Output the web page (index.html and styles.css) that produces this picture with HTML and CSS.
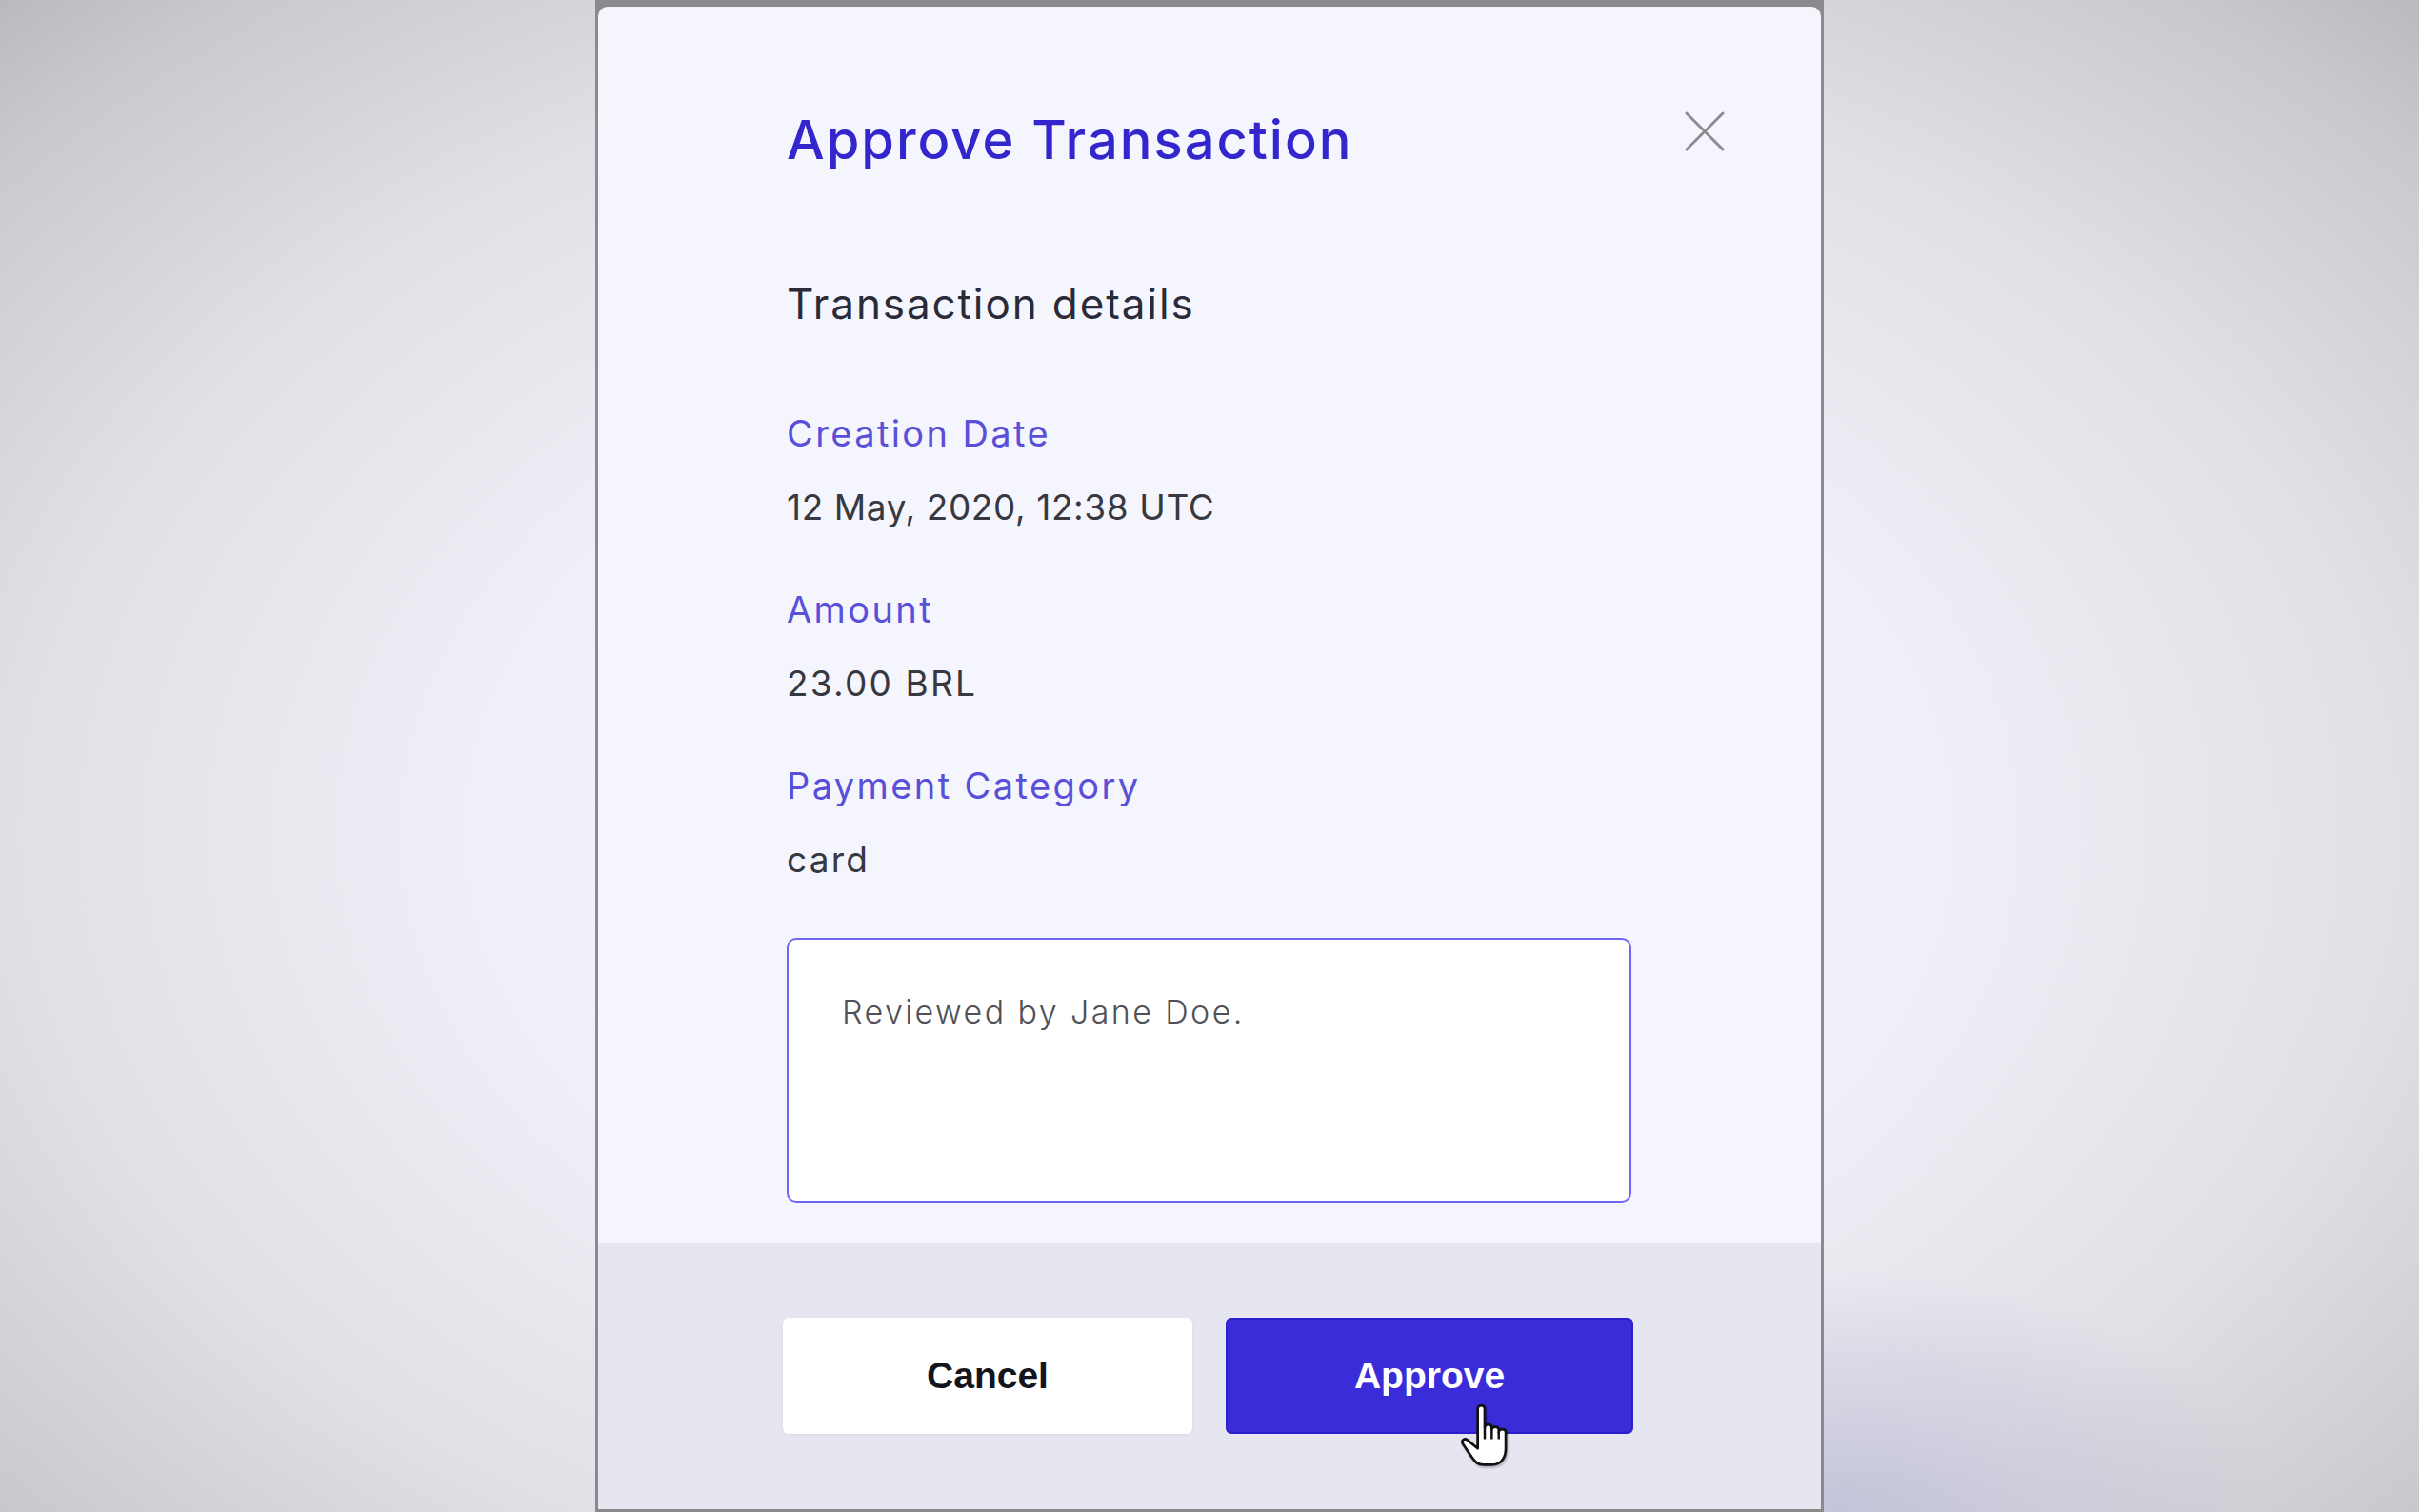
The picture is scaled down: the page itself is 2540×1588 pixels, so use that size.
FILE: index.html
```html
<!DOCTYPE html>
<html lang="en">
<head>
<meta charset="utf-8">
<title>Approve Transaction</title>
<link rel="stylesheet" href="styles.css">
</head>
<body>
<div class="stage">
  <div class="frame">
    <div class="modal">
      <div class="modal-body">
        <h1 class="title">Approve Transaction</h1>
        <button class="close" aria-label="Close">
          <svg viewBox="0 0 44 44" width="44" height="44"><path d="M3 3 L41 41 M41 3 L3 41" stroke="#8c8c90" stroke-width="3" stroke-linecap="round" fill="none"/></svg>
        </button>
        <h2 class="subtitle">Transaction details</h2>
        <div class="fields">
          <div class="field">
            <div class="label">Creation Date</div>
            <div class="value value-date">12 May, 2020, 12:38 UTC</div>
          </div>
          <div class="field">
            <div class="label">Amount</div>
            <div class="value">23.00 BRL</div>
          </div>
          <div class="field">
            <div class="label">Payment Category</div>
            <div class="value">card</div>
          </div>
        </div>
        <textarea class="note">Reviewed by Jane Doe.</textarea>
      </div>
      <div class="modal-footer">
        <button class="btn btn-cancel">Cancel</button>
        <button class="btn btn-approve">Approve
          <svg class="cursor" viewBox="0 0 22 28" width="54" height="69"><path d="M8 3 C8 1.2 11 1.2 11 3 L11 11 C11 9.4 14 9.4 14 11 L14 12 C14 10.4 17 10.4 17 12 L17 13 C17 11.4 20 11.4 20 13 L20 20 C20 24 18 27 14 27 L10.5 27 C8 27 7 25.8 5.5 23.8 L1.6 18 C0.8 16.7 2.4 15.3 3.6 16.4 L8 20 Z" fill="#fff" stroke="#111" stroke-width="1.1" stroke-linejoin="round"/><path d="M11 11 L11 16 M14 12 L14 16 M17 13 L17 16" stroke="#111" stroke-width="1" fill="none"/></svg>
        </button>
      </div>
    </div>
  </div>
</div>
</body>
</html>
```

FILE: styles.css
```css
html, body {
  margin: 0;
  padding: 0;
  height: 100%;
}

body {
  width: 2540px;
  height: 1588px;
  overflow: hidden;
  background:
    radial-gradient(ellipse 18% 16% at 76% 100%, rgba(172, 172, 208, 0.55) 0%, rgba(172, 172, 208, 0) 100%),
    radial-gradient(ellipse 72% 78% at 50% 55%, #f6f6fd 0%, #efeff7 42%, #e0e0e6 68%, #c8c8cd 90%, #b8b8bc 100%);
  font-family: Inter, "Noto Sans", sans-serif;
}

.stage {
  display: flex;
  justify-content: center;
  height: 100%;
}

.frame {
  width: 1290px;
  box-sizing: border-box;
  background: #8b8b8e;
  padding: 7px 3px 3px 3px;
  display: flex;
}

.modal {
  position: relative;
  flex: 1;
  display: flex;
  flex-direction: column;
  border-radius: 10px 10px 0 0;
  overflow: hidden;
}

.modal-body {
  background: #f5f6fd;
  padding: 105px 199px 43px 198px;
  display: flex;
  flex-direction: column;
}

.title {
  margin: 0;
  font-size: 56px;
  line-height: 70px;
  font-weight: 500;
  color: #3326cc;
  letter-spacing: 2px;
}

.close {
  position: absolute;
  top: 109px;
  right: 100px;
  width: 44px;
  height: 44px;
  padding: 0;
  border: 0;
  background: none;
  display: flex;
}

.subtitle {
  margin: 109px 0 0 0;
  font-size: 44px;
  line-height: 56px;
  font-weight: 400;
  color: #2a2a38;
  letter-spacing: 1.9px;
}

.fields {
  display: flex;
  flex-direction: column;
  gap: 57px;
  margin-top: 83px;
}

.field {
  display: flex;
  flex-direction: column;
  gap: 28px;
}

.label {
  font-size: 38px;
  line-height: 50px;
  color: #5a4fd8;
  letter-spacing: 2.4px;
}

.value {
  font-size: 37px;
  line-height: 50px;
  color: #383840;
  letter-spacing: 2.2px;
}

.value-date {
  letter-spacing: 0.6px;
}

.note {
  margin-top: 57px;
  width: 887px;
  height: 278px;
  box-sizing: border-box;
  border: 2px solid #6f67f1;
  border-radius: 10px;
  background: #fff;
  padding: 54px 56px;
  font-family: Inter, "Noto Sans", sans-serif;
  font-size: 34px;
  line-height: 44px;
  font-weight: 300;
  color: #505058;
  letter-spacing: 2.4px;
  resize: none;
  outline: none;
}

.modal-footer {
  flex: 1;
  background: #e6e6f1;
  display: flex;
  gap: 35px;
  padding: 78px 0 0 194px;
  align-items: flex-start;
}

.btn {
  height: 122px;
  border-radius: 6px;
  font-family: "Liberation Sans", Arial, sans-serif;
  font-weight: 700;
  font-size: 39px;
  padding: 0;
  cursor: pointer;
}

.btn-cancel {
  width: 430px;
  background: #fff;
  color: #14141c;
  border: 0;
  box-shadow: 0 1px 3px rgba(0, 0, 0, 0.06);
}

.btn-approve {
  position: relative;
  width: 428px;
  background: #3a2dd9;
  color: #fff;
  border: 2px solid #2c1fd2;
}

.cursor {
  position: absolute;
  left: 243px;
  top: 86px;
  filter: drop-shadow(1px 2px 1px rgba(0, 0, 0, 0.25));
}
```
